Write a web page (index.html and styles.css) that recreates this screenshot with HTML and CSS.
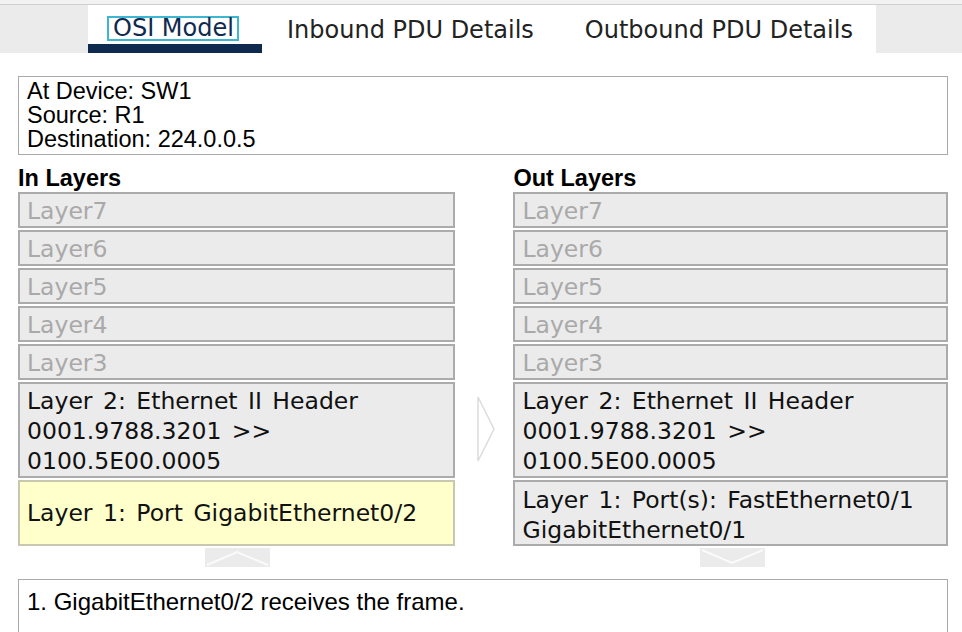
FILE: index.html
```html
<!DOCTYPE html>
<html>
<head>
<meta charset="utf-8">
<link rel="stylesheet" href="styles.css">
</head>
<body>
<div class="topstrip"></div>
<div class="tabbar">
  <div class="filler left"></div>
  <div class="tabs">
    <div class="tab active"><span class="focus">OSI Model</span></div>
    <div class="tab t2">Inbound PDU Details</div>
    <div class="tab t3">Outbound PDU Details</div>
  </div>
  <div class="filler right"></div>
</div>
<div class="content">
  <div class="info">
    <div>At Device: SW1</div>
    <div>Source: R1</div>
    <div>Destination: 224.0.0.5</div>
  </div>
  <div class="columns">
    <div class="col incol">
      <div class="heading">In Layers</div>
      <div class="layer off">Layer7</div>
      <div class="layer off">Layer6</div>
      <div class="layer off">Layer5</div>
      <div class="layer off">Layer4</div>
      <div class="layer off">Layer3</div>
      <div class="layer tall">Layer 2: Ethernet II Header<br>0001.9788.3201 &gt;&gt;<br>0100.5E00.0005</div>
      <div class="layer l1 hl">Layer 1: Port GigabitEthernet0/2</div>
      <div class="navbtn">
        <svg width="65" height="19" viewBox="0 0 65 19"><polyline points="2,17 32,4 63,17" fill="none" stroke="#fafafa" stroke-width="2"/></svg>
      </div>
    </div>
    <div class="mid">
      <svg width="20" height="66" viewBox="0 0 20 66"><polygon points="2,1 18,33 2,65" fill="none" stroke="#dcdcdc" stroke-width="1.5"/></svg>
    </div>
    <div class="col outcol">
      <div class="heading">Out Layers</div>
      <div class="layer off">Layer7</div>
      <div class="layer off">Layer6</div>
      <div class="layer off">Layer5</div>
      <div class="layer off">Layer4</div>
      <div class="layer off">Layer3</div>
      <div class="layer tall">Layer 2: Ethernet II Header<br>0001.9788.3201 &gt;&gt;<br>0100.5E00.0005</div>
      <div class="layer l1 two">Layer 1: Port(s): FastEthernet0/1<br>GigabitEthernet0/1</div>
      <div class="navbtn">
        <svg width="65" height="19" viewBox="0 0 65 19"><polyline points="2,2 32,15 63,2" fill="none" stroke="#fafafa" stroke-width="2"/></svg>
      </div>
    </div>
  </div>
  <div class="desc">1. GigabitEthernet0/2 receives the frame.</div>
</div>
</body>
</html>
```
FILE: styles.css
```css
html, body {
  margin: 0;
  padding: 0;
  background: #ffffff;
}
body {
  width: 962px;
  height: 632px;
  overflow: hidden;
  font-family: "Liberation Sans", Arial, sans-serif;
  color: #111;
}
.topstrip {
  height: 4px;
  background: #f2f2f2;
  border-bottom: 1px solid #cfcfcf;
}
.tabbar {
  display: flex;
  height: 48px;
}
.filler {
  background: #ebebeb;
}
.filler.left { width: 88px; }
.filler.right { flex: 1; }
.tabs {
  width: 788px;
  display: flex;
  background: #fff;
  font-family: "DejaVu Sans", Verdana, sans-serif;
  font-size: 24px;
  color: #222;
}
.tab {
  box-sizing: border-box;
  height: 48px;
  padding-top: 12px;
  line-height: 26px;
  white-space: nowrap;
}
.tab.active {
  width: 174px;
  border-bottom: 9px solid #0f2a4f;
  padding-left: 19px;
  padding-top: 10px;
  color: #0f2a4f;
}
.focus {
  display: inline-block;
  border: 2px solid #3db6d2;
  padding: 0 3px 0 4px;
  line-height: 21px;
  height: 21px;
}
.tab.t2 { padding-left: 25px; }
.tab.t3 { padding-left: 51px; }
.content {
  padding: 23px 14px 0 18px;
}
.info {
  box-sizing: border-box;
  width: 930px;
  height: 79px;
  border: 1px solid #aaa;
  padding: 2px 8px;
  font-size: 23.5px;
  line-height: 24px;
  color: #000;
}
.columns {
  display: flex;
  margin-top: 10px;
}
.col {
  display: flex;
  flex-direction: column;
  gap: 2px;
}
.incol { width: 437px; }
.outcol { width: 435px; }
.heading {
  font-weight: bold;
  font-size: 23.5px;
  line-height: 25px;
  color: #000;
  height: 25px;
  padding-top: 1px;
  margin-bottom: -1px;
}
.layer {
  box-sizing: border-box;
  height: 36px;
  border: 2px solid #ababab;
  background: #ebebeb;
  font-family: "DejaVu Sans", Verdana, sans-serif;
  font-size: 23.5px;
  word-spacing: 3px;
  line-height: 30px;
  padding-left: 7px;
  padding-top: 2px;
  color: #111;
  white-space: nowrap;
}
.layer.off { color: #a9a9a9; }
.layer.tall {
  height: 96px;
  padding-top: 2px;
}
.layer.l1 { height: 66px; }
.layer.hl {
  background: #ffffcc;
  border-color: #c8c8b0;
  padding-top: 16px;
}
.layer.two { padding-top: 3px; }
.navbtn {
  align-self: center;
  width: 65px;
  height: 19px;
  background: #ebebeb;
  display: flex;
}
.incol .navbtn { margin-left: 3px; }
.outcol .navbtn { margin-left: 4px; }
.mid {
  width: 59px;
  display: flex;
  justify-content: center;
  padding-top: 231px;
  padding-left: 3px;
  box-sizing: border-box;
}
.desc {
  box-sizing: border-box;
  width: 930px;
  height: 70px;
  margin-top: 12px;
  border: 1px solid #aaa;
  padding: 10px 8px;
  font-size: 24px;
  line-height: 24px;
  color: #000;
}
```
